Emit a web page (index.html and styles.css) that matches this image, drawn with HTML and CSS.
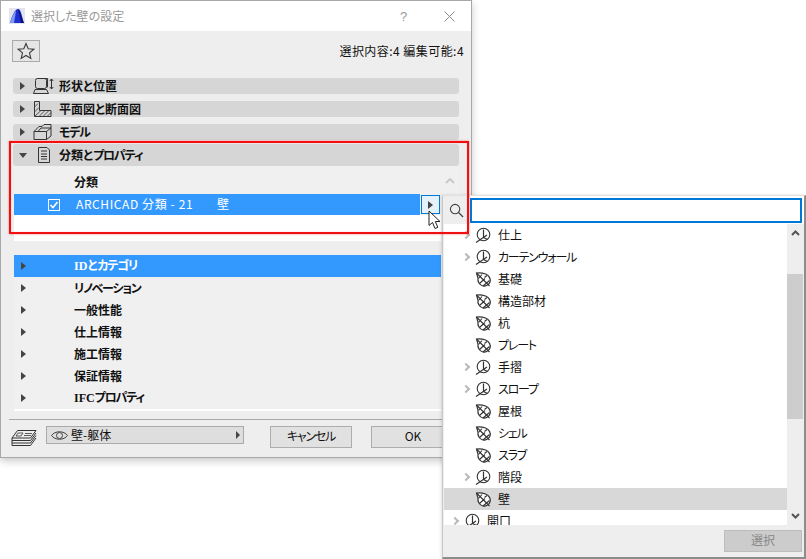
FILE: index.html
```html
<!DOCTYPE html>
<html lang="ja">
<head>
<meta charset="utf-8">
<title>選択した壁の設定</title>
<link rel="stylesheet" href="styles.css">
</head>
<body>
<svg class="defs" width="0" height="0">
  <defs>
    <symbol id="folder" viewBox="0 0 17 17">
      <circle cx="8.500" cy="7.500" r="6.300" fill="#fff" stroke="#333" stroke-width="1.100"/>
      <path d="M1 15.500 L12 8 M8.500 2.500 V10.500 M8.500 10.500 L12.500 12.500" fill="none" stroke="#333" stroke-width="1.200"/>
    </symbol>
    <symbol id="leaf" viewBox="0 0 17 17">
      <path d="M1.500 2 C5 1.500 8 2 10.500 3 C14.500 4.500 16 8.500 15 11 C14 14 10.500 15.500 8 15 C4 14 2.500 10 3 7 Z" fill="#fff" stroke="#333" stroke-width="1.200"/>
      <path d="M1.500 2 L14.500 15 M4.500 12.500 L10 7.500 M8 15 L14.500 9.500 M7 3.500 L3.500 7.500 M12 4.500 L9.500 6.500" fill="none" stroke="#333" stroke-width="1.100"/>
    </symbol>
  </defs>
</svg>

<section class="dialog">
  <header class="titlebar">
    <svg class="logo" width="16" height="16" viewBox="0 0 16 16"><rect width="16" height="16" fill="#e4e4ee"/><path d="M1 15 C3 8 6 1 9 1 C12 1 13 9 15 15 Z" fill="#1f2fd0"/><path d="M1 15 C3 9 5 4 7 3 L5 15 Z" fill="#7f9cf5"/><path d="M9 1 C11 2 12 9 15 15 H12 C11 9 10 5 9 1 Z" fill="#0b1170"/></svg>
    <span class="title">選択した壁の設定</span>
    <span class="help">?</span>
    <svg class="close" width="11" height="11" viewBox="0 0 11 11"><path d="M0.500 0.500 L10.500 10.500 M10.500 0.500 L0.500 10.500" stroke="#8a8a8a" stroke-width="1" fill="none"/></svg>
  </header>

  <div class="toolbar">
    <button class="star-btn" type="button">
      <svg width="18" height="18" viewBox="0 0 18 18"><path d="M9 1.500 L11.200 6.700 L16.800 7.200 L12.500 10.900 L13.800 16.400 L9 13.500 L4.200 16.400 L5.500 10.900 L1.200 7.200 L6.800 6.700 Z" fill="none" stroke="#3a3a3a" stroke-width="1.100"/></svg>
    </button>
    <span class="count">選択内容:4 編集可能:4</span>
  </div>

  <div class="sections">
    <div class="bar">
      <i class="tri"></i>
      <svg class="bar-icon" width="22" height="16" viewBox="0 0 22 16"><rect x="2.500" y="0.500" width="11" height="10" rx="2" fill="none" stroke="#333"/><path d="M4.500 0.500 H14.500 V9 H13.500" fill="none" stroke="#333"/><path d="M2 11.500 H13.500 L15.500 15.500 H0.500 Z" fill="none" stroke="#333"/><path d="M18.500 1 V11 M16.800 3 L18.500 1 L20.200 3 M16.800 9 L18.500 11 L20.200 9" fill="none" stroke="#333"/></svg>
      <span>形状と位置</span>
    </div>
    <div class="bar">
      <i class="tri"></i>
      <svg class="bar-icon" width="22" height="16" viewBox="0 0 22 16"><path d="M1.500 0.500 H6.500 V9.500 H18 V15.500 H1.500 Z" fill="none" stroke="#333"/><path d="M1.500 6 L5 2.500 M1.500 11 L6 6.500 M2 15 L8 9.500 M6 15.500 L12 9.500 M10 15.500 L16 9.500 M14 15.500 L18 11.500" stroke="#555" fill="none"/></svg>
      <span>平面図と断面図</span>
    </div>
    <div class="bar">
      <i class="tri"></i>
      <svg class="bar-icon" width="22" height="16" viewBox="0 0 22 16"><path d="M1 7.500 L6 2.500 H9 L11 0.500 H18 V4 M1 7.500 H13.500 L18 4 H8 L5 7.500 M1 7.500 V15.500 H13.500 L18 12 V4 M13.500 7.500 V15.500" fill="none" stroke="#333"/></svg>
      <span class="kana">モデル</span>
    </div>
    <div class="bar open">
      <i class="tri down"></i>
      <svg class="bar-icon" width="22" height="16" viewBox="0 0 22 16"><path d="M5.500 0.500 H14 L16.500 3 V15.500 H5.500 Z" fill="none" stroke="#333"/><path d="M8 4 H14 M8 7 H14 M8 9.500 H14 M8 12 H14" stroke="#333" fill="none"/></svg>
      <span>分類と<span class="kana">プロパティ</span></span>
    </div>
  </div>

  <div class="class-panel">
    <div class="class-list">
      <div class="class-head"><span>分類</span></div>
      <div class="class-row">
        <svg class="check" width="12" height="12" viewBox="0 0 12 12"><rect x="0.500" y="0.500" width="11" height="11" fill="none" stroke="#fff"/><path d="M2.500 6 L5 8.500 L9.500 3" fill="none" stroke="#fff" stroke-width="1.600"/></svg>
        <span class="class-name">ARCHICAD 分類 - 21</span>
        <span class="class-value">壁</span>
      </div>
      <div class="class-blank"></div>
    </div>
    <div class="mini-scroll">
      <svg width="10" height="6" viewBox="0 0 10 6"><path d="M1 5 L5 1 L9 5" fill="none" stroke="#c8c8c8" stroke-width="1.800"/></svg>
    </div>
  </div>

  <div class="props">
    <div class="prop selected"><i class="tri"></i><span><span class="latin">ID</span>と<span class="kana">カテゴリ</span></span></div>
    <div class="prop"><i class="tri"></i><span class="kana">リノベーション</span></div>
    <div class="prop"><i class="tri"></i><span>一般性能</span></div>
    <div class="prop"><i class="tri"></i><span>仕上情報</span></div>
    <div class="prop"><i class="tri"></i><span>施工情報</span></div>
    <div class="prop"><i class="tri"></i><span>保証情報</span></div>
    <div class="prop"><i class="tri"></i><span><span class="latin">IFC</span><span class="kana">プロパティ</span></span></div>
  </div>

  <footer class="footer">
    <svg class="layers" width="26" height="18" viewBox="0 0 26 18"><path d="M6.500 1.500 H25 L19.500 9 H1 Z" fill="none" stroke="#333"/><path d="M1 11.500 H19.500 L25 4 M1 14 H19.500 L25 6.500 M1 16.500 H19.500 L25 9 M1 9 V16.500" fill="none" stroke="#333"/><path d="M7 4 H12 L10 7 H5 Z M14 4.500 H21 M13 6.500 H20" fill="none" stroke="#333" stroke-width="0.800"/></svg>
    <div class="select">
      <svg width="17" height="11" viewBox="0 0 17 11"><path d="M0.500 5.500 C4 0.500 13 0.500 16.500 5.500 C13 10.500 4 10.500 0.500 5.500 Z" fill="none" stroke="#444"/><circle cx="8.500" cy="5.500" r="3" fill="none" stroke="#444"/></svg>
      <span>壁-躯体</span>
      <i class="tri small"></i>
    </div>
    <button class="btn cancel kana" type="button">キャンセル</button>
    <button class="btn ok" type="button">OK</button>
  </footer>
</section>

<section class="popup">
  <div class="search">
    <div class="search-icon">
      <svg width="15" height="15" viewBox="0 0 16 16"><circle cx="6.500" cy="6.500" r="5" fill="none" stroke="#444" stroke-width="1.200"/><path d="M10.200 10.200 L15 15" stroke="#444" stroke-width="1.400"/></svg>
    </div>
    <div class="search-field"></div>
  </div>
  <div class="tree-wrap">
    <div class="tree">
      <div class="node branch"><i class="chev"></i><svg class="n-icon"><use href="#folder"/></svg><span>仕上</span></div>
      <div class="node branch"><i class="chev"></i><svg class="n-icon"><use href="#folder"/></svg><span class="kana">カーテンウォール</span></div>
      <div class="node"><svg class="n-icon"><use href="#leaf"/></svg><span>基礎</span></div>
      <div class="node"><svg class="n-icon"><use href="#leaf"/></svg><span>構造部材</span></div>
      <div class="node"><svg class="n-icon"><use href="#leaf"/></svg><span>杭</span></div>
      <div class="node"><svg class="n-icon"><use href="#leaf"/></svg><span class="kana">プレート</span></div>
      <div class="node branch"><i class="chev"></i><svg class="n-icon"><use href="#folder"/></svg><span>手摺</span></div>
      <div class="node branch"><i class="chev"></i><svg class="n-icon"><use href="#folder"/></svg><span class="kana">スロープ</span></div>
      <div class="node"><svg class="n-icon"><use href="#leaf"/></svg><span>屋根</span></div>
      <div class="node"><svg class="n-icon"><use href="#leaf"/></svg><span class="kana">シェル</span></div>
      <div class="node"><svg class="n-icon"><use href="#leaf"/></svg><span class="kana">スラブ</span></div>
      <div class="node branch"><i class="chev"></i><svg class="n-icon"><use href="#folder"/></svg><span>階段</span></div>
      <div class="node current"><svg class="n-icon"><use href="#leaf"/></svg><span>壁</span></div>
      <div class="node branch top"><i class="chev"></i><svg class="n-icon"><use href="#folder"/></svg><span>開口</span></div>
    </div>
    <div class="scrollbar">
      <svg class="arrow" width="9" height="6" viewBox="0 0 9 6"><path d="M1 5 L4.500 1.500 L8 5" fill="none" stroke="#555" stroke-width="2"/></svg>
      <div class="track"><div class="thumb"></div></div>
      <svg class="arrow" width="9" height="6" viewBox="0 0 9 6"><path d="M1 1 L4.500 4.500 L8 1" fill="none" stroke="#555" stroke-width="2"/></svg>
    </div>
  </div>
  <div class="popup-foot"><button class="pick" type="button">選択</button></div>
</section>

<div class="highlight"></div>
<button class="expand" type="button"><i class="tri"></i></button>
<svg class="cursor" width="14" height="20" viewBox="0 0 14 20"><path d="M1 1 V15.500 L4.500 12.500 L7 18.500 L9.800 17.300 L7.300 11.500 L12 11.500 Z" fill="#fff" stroke="#222" stroke-width="1"/></svg>
</body>
</html>
```
FILE: styles.css
```css
* { box-sizing: border-box; }
html, body { margin: 0; padding: 0; }
body {
  position: relative;
  width: 806px;
  height: 559px;
  overflow: hidden;
  background: #fff;
  font-family: "Noto Sans CJK JP", "Noto Sans", sans-serif;
  font-size: 12px;
  font-feature-settings: "palt";
  color: #111;
}
.defs { position: absolute; }
button { font: inherit; font-feature-settings: inherit; color: inherit; padding: 0 0 3px; }
.kana { letter-spacing: -1.2px; }

.tri {
  display: block;
  width: 0;
  height: 0;
  border-style: solid;
  border-width: 4.5px 0 4.5px 5px;
  border-color: transparent transparent transparent #444;
  flex: none;
}
.tri.down {
  border-width: 5px 4px 0 4px;
  border-color: #444 transparent transparent transparent;
}

.dialog {
  position: absolute;
  left: 0;
  top: 0;
  width: 472px;
  height: 458px;
  background: #eee;
  border: 1px solid #a8a8a8;
  box-shadow: 0 3px 8px rgba(0, 0, 0, 0.22);
}
.titlebar {
  display: flex;
  align-items: center;
  height: 30px;
  background: #fff;
  padding-left: 8px;
}
.title { margin-left: 6px; color: #999; width: 369px; padding-bottom: 2px; }
.help { color: #999; font-size: 13px; font-family: "Liberation Sans", sans-serif; width: 44px; }

.toolbar {
  display: flex;
  align-items: center;
  justify-content: space-between;
  height: 22px;
  margin: 9px 7px 0 11px;
}
.star-btn {
  display: flex;
  align-items: center;
  justify-content: center;
  width: 28px;
  height: 22px;
  padding: 0;
  background: #e6e6e6;
  border: 1px solid #aaa;
}
.count { letter-spacing: 0.45px; padding-bottom: 2px; }

.sections {
  display: flex;
  flex-direction: column;
  gap: 7px;
  margin: 16px 12px 0 12px;
}
.bar {
  display: flex;
  align-items: center;
  height: 16px;
  background: #d6d6d6;
  border-radius: 3px;
  padding-left: 7px;
  font-weight: 700;
}
.bar > span { padding-bottom: 2px; }
.bar .bar-icon { margin-left: 8px; margin-right: 4px; flex: none; }
.bar.open { height: 22px; margin-top: -3px; }
.bar.open .tri { margin-left: -1px; margin-right: -2px; }

.class-panel {
  display: flex;
  margin: 0 12px 0 13px;
  height: 75px;
}
.class-list { width: 427px; background: #f0f0f0; display: flex; flex-direction: column; }
.class-head {
  display: flex;
  align-items: center;
  height: 28px;
  padding: 2px 0 0 60px;
  font-weight: 700;
}
.class-row {
  display: flex;
  align-items: center;
  height: 21px;
  width: 406px;
  background: #3399ff;
  color: #fff;
  padding-left: 34px;
}
.check { flex: none; }
.class-name { margin-left: 16px; width: 141px; letter-spacing: 0.6px; padding-bottom: 2px; }
.class-value { padding-bottom: 2px; }
.class-blank { flex: 1; background: #fff; }
.mini-scroll {
  width: 18px;
  background: #f0f0f0;
  display: flex;
  justify-content: center;
  padding-top: 12px;
}

.props {
  margin: 14px 30px 0 13px;
  border-bottom: 2px solid #fff;
  background: #f0f0f0;
}
.prop {
  display: flex;
  align-items: center;
  height: 22px;
  padding-left: 7px;
  font-weight: 700;
}
.prop > span { margin-left: 48px; padding-bottom: 2px; }
.prop.selected { background: #3399ff; color: #fff; }
.latin { font-family: "Liberation Serif", serif; }

.footer {
  display: flex;
  align-items: flex-start;
  margin: 8px 0 0 8px;
  padding-top: 6px;
  border-top: 1px solid #a8a8a8;
  height: 38px;
}
.layers { margin: 3px 0 0 2px; flex: none; }
.select {
  display: flex;
  align-items: center;
  width: 198px;
  height: 18px;
  margin-left: 9px;
  padding: 0 3px 0 4px;
  background: #dedede;
  border: 1px solid #aaa;
}
.select span { margin-left: 3px; flex: 1; padding-bottom: 2px; }
.tri.small { border-width: 4px 0 4px 4px; }
.btn {
  height: 22px;
  background: #e1e1e1;
  border: 1px solid #adadad;
}
.cancel { width: 82px; margin-left: 26px; }
.ok { width: 84px; margin-left: 19px; }

.highlight {
  position: absolute;
  left: 9px;
  top: 141px;
  width: 460px;
  height: 93px;
  border: 2px solid #f01010;
  box-shadow: 0 0 2px rgba(255, 0, 0, 0.5), inset 0 0 1px rgba(255, 0, 0, 0.4);
}

.popup {
  position: absolute;
  left: 442px;
  top: 195px;
  width: 364px;
  height: 364px;
  display: flex;
  flex-direction: column;
  background: #eee;
  border-left: 1px solid #c8c8c8;
  border-top: 1px solid #e0e0e0;
  border-right: 2px solid #8c8c8c;
  border-bottom: 2px solid #8c8c8c;
  box-shadow: -1px 0 3px rgba(0, 0, 0, 0.12);
}
.search { display: flex; height: 28px; background: #fff; flex: none; }
.search-icon {
  width: 27px;
  display: flex;
  align-items: flex-start;
  justify-content: center;
  background: #eee;
  padding: 7px 0 0;
}
.search-field {
  width: 332px;
  height: 25px;
  margin-top: 2px;
  background: #fff;
  border: 2px solid #0078d7;
}
.tree-wrap { display: flex; height: 301px; flex: none; }
.tree { width: 343px; background: #fff; overflow: hidden; margin-left: 1px; padding-left: 1px; }
.node {
  display: flex;
  align-items: center;
  height: 22px;
  padding-left: 30px;
}
.node.branch { padding-left: 18px; }
.node.top { padding-left: 7px; }
.chev {
  display: block;
  width: 6px;
  height: 6px;
  margin-right: 6px;
  border-top: 2px solid #bbb;
  border-right: 2px solid #bbb;
  transform: rotate(45deg);
  flex: none;
}
.n-icon { width: 17px; height: 17px; flex: none; }
.node span { margin-left: 6px; padding-bottom: 2px; }
.node.current { background: #d8d8d8; margin-left: -1px; padding-left: 31px; }
.scrollbar {
  width: 16px;
  display: flex;
  flex-direction: column;
  align-items: center;
  background: #eee;
  padding: 6px 0 6px;
}
.track { flex: 1; width: 100%; padding-top: 38px; }
.thumb { height: 145px; background: #cdcdcd; }
.arrow { flex: none; }
.popup-foot { flex: 1; display: flex; justify-content: flex-end; padding: 5px 2px 0 0; }
.pick {
  width: 78px;
  height: 22px;
  background: #ccc;
  border: 1px solid #bdbdbd;
  color: #888;
}

.expand {
  position: absolute;
  left: 421px;
  top: 195px;
  width: 19px;
  height: 19px;
  padding: 0;
  display: flex;
  align-items: center;
  justify-content: center;
  background: #e5f1fb;
  border: 1px solid #0078d7;
}
.cursor { position: absolute; left: 428px; top: 210px; }
```
